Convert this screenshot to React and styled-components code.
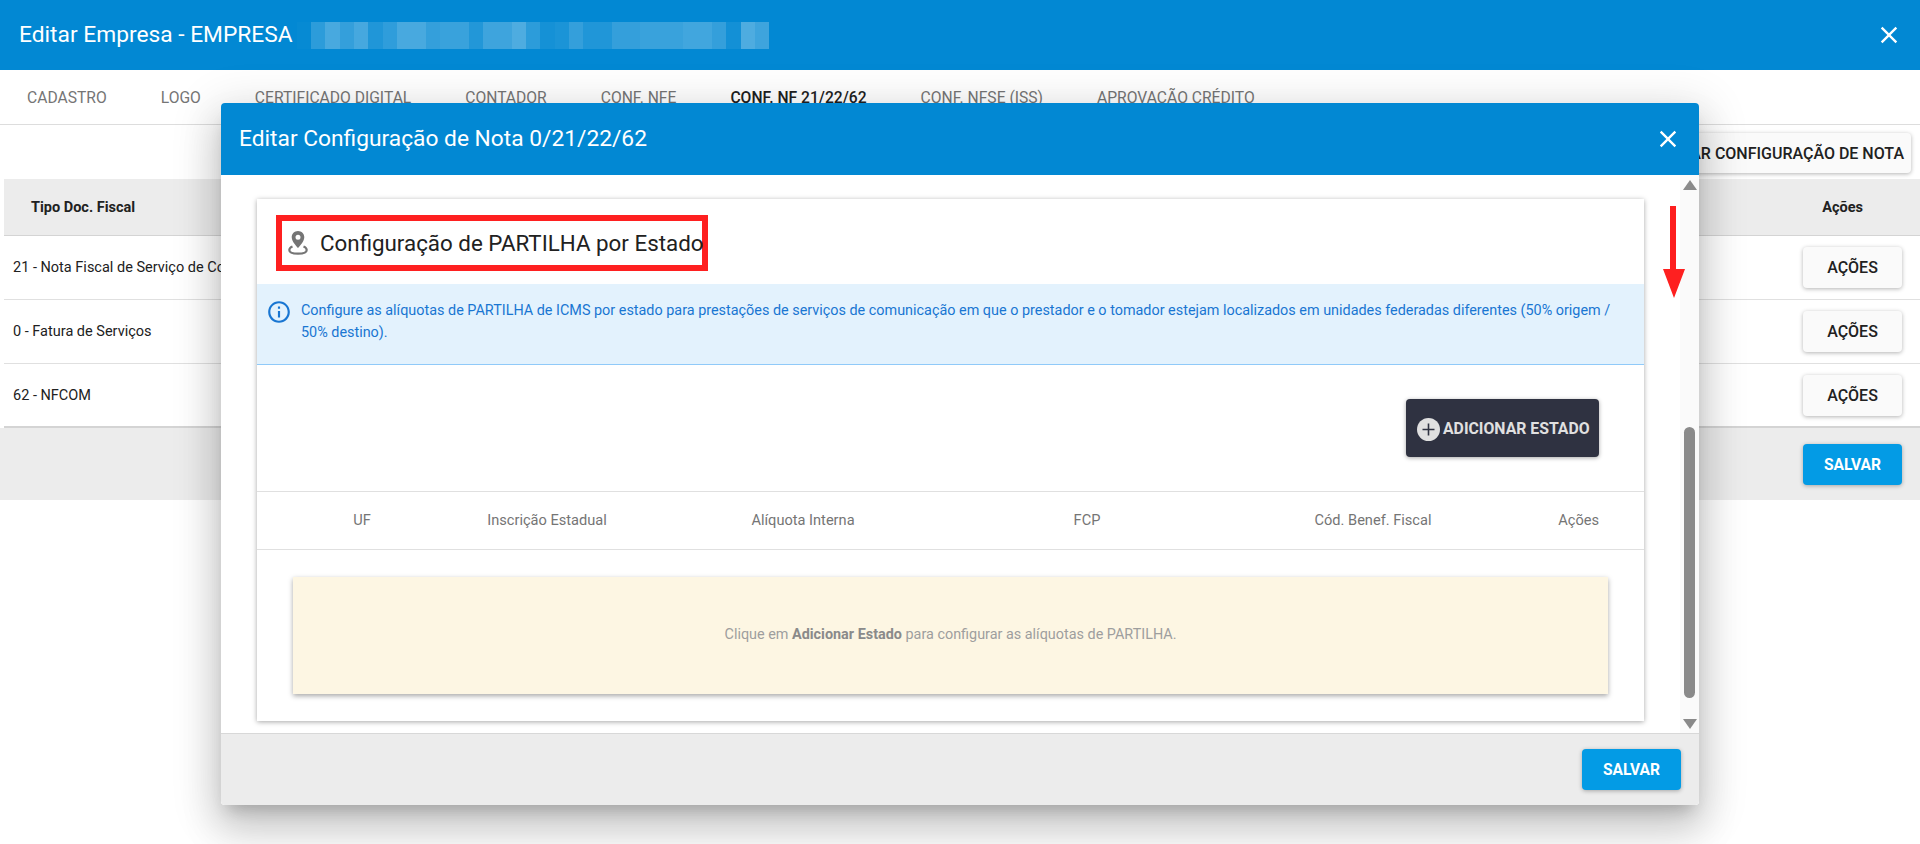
import React from "react";
import styled, { createGlobalStyle } from "styled-components";
import { MdClose, MdInfoOutline } from "react-icons/md";

const GlobalStyle = createGlobalStyle`
  html, body {
    margin: 0;
    padding: 0;
    background: #fff;
    font-family: Roboto, "Liberation Sans", sans-serif;
    overflow: hidden;
  }
  * {
    box-sizing: border-box;
  }
`;

const Page = styled.div`
  position: relative;
  width: 1920px;
  height: 844px;
  overflow: hidden;
`;

const TopBar = styled.header`
  display: flex;
  align-items: center;
  height: ${(p) => p.$height}px;
  padding: 0 ${(p) => p.$pad}px 0 ${(p) => p.$left}px;
  background: #0288d3;
  color: #fff;
`;

const BarTitle = styled.h1`
  margin: 0;
  padding-bottom: 2px;
  font-size: 22.75px;
  font-weight: 400;
  white-space: nowrap;
`;

const Mosaic = styled.div`
  display: flex;
  width: 473px;
  height: 27px;
  margin-left: 4px;
`;

const MosaicCell = styled.span`
  flex: 1;
  background: rgba(255, 255, 255, ${(p) => p.$alpha});
`;

const CloseButton = styled.button`
  display: flex;
  margin-left: auto;
  padding: 0;
  border: 0;
  background: none;
  color: #fff;
  font-size: 28px;
`;

const Tabs = styled.nav`
  display: flex;
  height: 55px;
  border-bottom: 1px solid #ddd;
`;

const Tab = styled.div`
  padding: 18px 27px 0;
  font-size: 15.65px;
  font-weight: ${(p) => (p.$active ? 500 : 400)};
  color: ${(p) => (p.$active ? "#212121" : "#757575")};
  white-space: nowrap;
`;

const Toolbar = styled.div`
  display: flex;
  justify-content: flex-end;
  height: 54px;
  padding: 8px 9px 0 0;
`;

const NewButton = styled.button`
  height: 40px;
  padding: 0 7px;
  border: 0;
  border-radius: 4px;
  background: #fafafa;
  box-shadow: 0 1px 4px rgba(0, 0, 0, 0.3);
  font: 500 16px Roboto, sans-serif;
  color: #212121;
`;

const Table = styled.div`
  margin-left: 4px;
  border-bottom: 2px solid #d4d4d4;
`;

const HeadRow = styled.div`
  display: flex;
  justify-content: space-between;
  align-items: center;
  height: 57px;
  padding: 0 57px 0 27px;
  background: #ececec;
  border-bottom: 1px solid #d4d4d4;
  font-size: 14.5px;
  font-weight: 700;
  color: #212121;
`;

const Row = styled.div`
  display: flex;
  justify-content: space-between;
  align-items: center;
  height: ${(p) => (p.$last ? 62 : 64)}px;
  padding: 0 18px 0 9px;
  border-bottom: ${(p) => (p.$last ? "0" : "1px solid #e0e0e0")};
  font-size: 14.5px;
  color: #212121;
`;

const ActionButton = styled.button`
  width: 99px;
  height: 41px;
  border: 0;
  border-radius: 4px;
  background: #fafafa;
  box-shadow: 0 1px 4px rgba(0, 0, 0, 0.3);
  font: 500 16px Roboto, sans-serif;
  color: #212121;
`;

const FootBar = styled.footer`
  display: flex;
  justify-content: flex-end;
  align-items: center;
  height: ${(p) => p.$height}px;
  padding: ${(p) => (p.$line ? 0 : 1)}px 18px 0 0;
  background: #ececec;
  border-top: ${(p) => (p.$line ? "1px solid #d8d8d8" : "0")};
`;

const SaveButton = styled.button`
  width: 99px;
  height: 41px;
  border: 0;
  border-radius: 4px;
  background: #039be5;
  box-shadow: 0 1px 4px rgba(0, 0, 0, 0.3);
  font: 700 15.6px Roboto, sans-serif;
  color: #fff;
`;

const Modal = styled.section`
  position: absolute;
  top: 103px;
  left: 221px;
  display: flex;
  flex-direction: column;
  width: 1478px;
  height: 702px;
  border-radius: 4px;
  overflow: hidden;
  background: #fff;
`;

const ModalShadow = styled.div`
  position: absolute;
  top: 103px;
  left: 221px;
  width: 1478px;
  height: 702px;
  border-radius: 4px;
  box-shadow: 0 11px 15px -7px rgba(0, 0, 0, 0.2),
    0 24px 38px 3px rgba(0, 0, 0, 0.14), 0 9px 46px 8px rgba(0, 0, 0, 0.12);
`;

const ModalBody = styled.div`
  display: flex;
  flex: 1;
  min-height: 0;
`;

const ScrollArea = styled.div`
  flex: 1;
  min-width: 0;
  padding: 24px 36px 12px;
`;

const Scrollbar = styled.div`
  display: flex;
  flex-direction: column;
  align-items: center;
  width: 19px;
  padding: 5px 0 4px;
  background: #fafafa;
`;

const ScrollArrow = styled.span`
  width: 0;
  height: 0;
  margin-top: ${(p) => (p.$down ? 21 : 0)}px;
  border-left: 7px solid transparent;
  border-right: 7px solid transparent;
  border-${(p) => (p.$down ? "top" : "bottom")}: 10px solid #8a8a8a;
`;

const ScrollThumb = styled.span`
  width: 11px;
  height: 271px;
  margin-top: auto;
  border-radius: 6px;
  background: #8a8a8a;
`;

const Card = styled.div`
  display: flex;
  flex-direction: column;
  height: 522px;
  background: #fff;
  box-shadow: 0 1px 5px rgba(0, 0, 0, 0.35);
`;

const SectionHead = styled.div`
  display: flex;
  align-items: center;
  gap: 12px;
  align-self: flex-start;
  width: 432px;
  height: 56px;
  margin: 16px 0 13px 19px;
  padding-left: 6px;
  border: 6px solid #fe2020;
  font-size: 22.35px;
  color: #212121;
  white-space: nowrap;
`;

const PinIcon = styled.svg`
  flex: none;
  width: 20px;
  height: 24px;
  fill: #757575;
`;

const InfoStrip = styled.div`
  display: flex;
  align-items: flex-start;
  gap: 9px;
  height: 81px;
  padding: 16px 24px 0 9px;
  background: #e3f2fd;
  border-bottom: 1px solid #90caf9;
  font-size: 14.4px;
  line-height: 22px;
  color: #1976d2;
`;

const InfoGlyph = styled(MdInfoOutline)`
  flex: none;
  margin-top: -1px;
  font-size: 26px;
`;

const AddZone = styled.div`
  display: flex;
  justify-content: flex-end;
  padding: 34px 45px 34px 0;
  border-bottom: 1px solid #e0e0e0;
`;

const AddButton = styled.button`
  display: flex;
  align-items: center;
  gap: 3px;
  width: 193px;
  height: 58px;
  padding: 0 0 0 11px;
  border: 0;
  border-radius: 4px;
  background: #2f3241;
  box-shadow: 0 1px 4px rgba(0, 0, 0, 0.35);
  font: 700 15.8px Roboto, sans-serif;
  color: #e0e0e0;
  white-space: nowrap;
`;

const PlusIcon = styled.svg`
  flex: none;
  width: 23px;
  height: 23px;
  margin-top: 2px;
`;

const StateHead = styled.div`
  display: grid;
  grid-template-columns: 210px 160px 352px 216px 356px 48px;
  align-items: center;
  height: 58px;
  padding-bottom: 2px;
  border-bottom: 1px solid #e0e0e0;
  font-size: 14.6px;
  color: #757575;
`;

const StateCol = styled.span`
  text-align: ${(p) => (p.$right ? "right" : "center")};
  white-space: nowrap;
`;

const EmptyBox = styled.div`
  display: flex;
  justify-content: center;
  align-items: center;
  height: 117px;
  margin: 27px 36px;
  padding-bottom: 2px;
  background: #fdf6e3;
  box-shadow: 0 2px 5px rgba(0, 0, 0, 0.35);
  font-size: 14.4px;
  color: #9e9e9e;
  b {
    font-weight: 700;
    color: #8a8a8a;
  }
`;

const RedArrow = styled.svg`
  position: absolute;
  top: 206px;
  left: 1663px;
  width: 22px;
  height: 92px;
  fill: #fe2020;
`;

const tabs = [
  "CADASTRO",
  "LOGO",
  "CERTIFICADO DIGITAL",
  "CONTADOR",
  "CONF. NFE",
  "CONF. NF 21/22/62",
  "CONF. NFSE (ISS)",
  "APROVAÇÃO CRÉDITO",
];

const rows = [
  "21 - Nota Fiscal de Serviço de Comunicação",
  "0 - Fatura de Serviços",
  "62 - NFCOM",
];

const mosaic = [
  0.02, 0.17, 0.28, 0.2, 0.27, 0.12, 0.18, 0.28, 0.28, 0.2, 0.22, 0.22, 0.13,
  0.24, 0.24, 0.3, 0.17, 0.08, 0.1, 0.2, 0.12, 0.12, 0.2, 0.2, 0.22, 0.22, 0.22,
  0.25, 0.25, 0.2, 0.07, 0.3, 0.24,
];

const columns = [
  "UF",
  "Inscrição Estadual",
  "Alíquota Interna",
  "FCP",
  "Cód. Benef. Fiscal",
];

const App = () => {
  return (
    <Page>
      <GlobalStyle />
      <TopBar $height={70} $pad={17} $left={19}>
        <BarTitle>Editar Empresa - EMPRESA</BarTitle>
        <Mosaic>
          {mosaic.map((alpha, i) => (
            <MosaicCell key={i} $alpha={alpha} />
          ))}
        </Mosaic>
        <CloseButton aria-label="Fechar">
          <MdClose />
        </CloseButton>
      </TopBar>

      <Tabs>
        {tabs.map((tab) => (
          <Tab key={tab} $active={tab === "CONF. NF 21/22/62"}>
            {tab}
          </Tab>
        ))}
      </Tabs>

      <Toolbar>
        <NewButton>ADICIONAR CONFIGURAÇÃO DE NOTA</NewButton>
      </Toolbar>

      <Table>
        <HeadRow>
          <span>Tipo Doc. Fiscal</span>
          <span>Ações</span>
        </HeadRow>
        {rows.map((row, i) => (
          <Row key={row} $last={i === rows.length - 1}>
            <span>{row}</span>
            <ActionButton>AÇÕES</ActionButton>
          </Row>
        ))}
      </Table>
      <FootBar $height={72}>
        <SaveButton>SALVAR</SaveButton>
      </FootBar>

      <ModalShadow />
      <Modal>
        <TopBar $height={72} $pad={17} $left={18}>
          <BarTitle>Editar Configuração de Nota 0/21/22/62</BarTitle>
          <CloseButton aria-label="Fechar">
            <MdClose />
          </CloseButton>
        </TopBar>

        <ModalBody>
          <ScrollArea>
            <Card>
              <SectionHead>
                <PinIcon viewBox="0 0 20 24">
                  <path
                    fillRule="evenodd"
                    d="M10 0C6.4 0 3.7 2.8 3.7 6.2 3.7 10.8 10 17 10 17s6.3-6.2 6.3-10.8C16.300 2.800 13.600 0 10 0zm0 3.800a2.500 2.500 0 1 1 0 5 2.500 2.500 0 0 1 0-5z"
                  />
                  <path
                    d="M4.500 15.500C2.500 16.300 1.300 17.500 1.300 19c0 2.500 4.200 3.700 8.700 3.700s8.700-1.200 8.700-3.700c0-1.500-1.200-2.700-3.200-3.500"
                    fill="none"
                    stroke="#757575"
                    strokeWidth="2.200"
                  />
                </PinIcon>
                Configuração de PARTILHA por Estado
              </SectionHead>

              <InfoStrip>
                <InfoGlyph />
                <span>
                  Configure as alíquotas de PARTILHA de ICMS por estado para
                  prestações de serviços de comunicação em que o prestador e o
                  tomador estejam localizados em unidades federadas diferentes
                  (50% origem / 50% destino).
                </span>
              </InfoStrip>

              <AddZone>
                <AddButton>
                  <PlusIcon viewBox="0 0 23 23">
                    <circle cx="11.500" cy="11.500" r="11.500" fill="#e0e0e0" />
                    <path
                      d="M11.500 5.500v12M5.500 11.500h12"
                      stroke="#2f3241"
                      strokeWidth="1.600"
                    />
                  </PlusIcon>
                  ADICIONAR ESTADO
                </AddButton>
              </AddZone>

              <StateHead>
                {columns.map((col) => (
                  <StateCol key={col}>{col}</StateCol>
                ))}
                <StateCol $right>Ações</StateCol>
              </StateHead>

              <EmptyBox>
                <span>
                  Clique em <b>Adicionar Estado</b> para configurar as alíquotas
                  de PARTILHA.
                </span>
              </EmptyBox>
            </Card>
          </ScrollArea>

          <Scrollbar>
            <ScrollArrow />
            <ScrollThumb />
            <ScrollArrow $down />
          </Scrollbar>
        </ModalBody>

        <FootBar $height={72} $line>
          <SaveButton>SALVAR</SaveButton>
        </FootBar>
      </Modal>

      <RedArrow viewBox="0 0 22 92">
        <path d="M7 0h6v63h9L11 92 0 63h7z" />
      </RedArrow>
    </Page>
  );
};

export default App;
